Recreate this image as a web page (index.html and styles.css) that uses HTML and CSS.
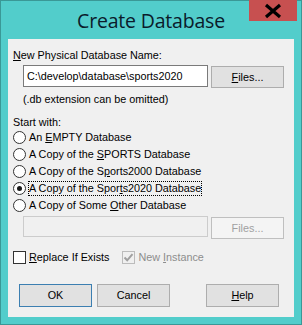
FILE: index.html
```html
<!DOCTYPE html>
<html lang="en">
<head>
    <meta charset="UTF-8">
    <title>Create Database</title>
    <link rel="stylesheet" href="styles.css">
</head>
<body>
    <div class="window">
        <div class="titlebar">
            <div class="title">Create Database</div>
            <div class="close">
                <svg width="20" height="16" viewBox="0 0 20 16">
                    <path d="M3 2 L17 14 M17 2 L3 14" stroke="#000" stroke-width="3.2" />
                </svg>
            </div>
        </div>

        <div class="client">
            <div class="label"><u>N</u>ew Physical Database Name:</div>
            <div class="file-row">
                <div class="textbox">C:\develop\database\sports2020</div>
                <div class="button"><u>F</u>iles...</div>
            </div>
            <div class="note">(.db extension can be omitted)</div>

            <div class="label start">Start with:</div>
            <div class="radio"><span class="dot"></span><span>An <u>E</u>MPTY Database</span></div>
            <div class="radio"><span class="dot"></span><span>A Copy of the <u>S</u>PORTS Database</span></div>
            <div class="radio"><span class="dot"></span><span>A Copy of the S<u>p</u>orts2000 Database</span></div>
            <div class="radio checked"><span class="dot"></span><span class="focus">A Copy of the Spor<u>t</u>s2020 Database</span></div>
            <div class="radio"><span class="dot"></span><span>A Copy of Some <u>O</u>ther Database</span></div>

            <div class="file-row other">
                <div class="textbox disabled"></div>
                <div class="button disabled">Files...</div>
            </div>

            <div class="check-row">
                <div class="check"><span class="box"></span><span><u>R</u>eplace If Exists</span></div>
                <div class="check disabled">
                    <span class="box">
                        <svg width="11" height="11" viewBox="0 0 11 11">
                            <path d="M1.5 5.5 L4.2 8.3 L9.5 2.2" fill="none" stroke="#a0a0a0" stroke-width="2" />
                        </svg>
                    </span>
                    <span>New <u>I</u>nstance</span>
                </div>
            </div>

            <div class="actions">
                <div class="button default">OK</div>
                <div class="button">Cancel</div>
                <div class="button help"><u>H</u>elp</div>
            </div>
        </div>
    </div>
</body>
</html>
```

FILE: styles.css
```css
body {
    margin: 0;
    background-color: #52cdcb;
    font-family: 'Liberation Sans', Arial, sans-serif;
    font-size: 10.8px;
    color: #000000;
}

.window {
    width: 302px;
    height: 325px;
    box-sizing: border-box;
    border: 1px solid #3a9896;
    background-color: #52cdcb;
    padding: 0 7px 7px 7px;
}

.titlebar {
    height: 38px;
    display: flex;
    justify-content: center;
    position: relative;
}

.title {
    font-family: 'Open Sans', 'Noto Sans', sans-serif;
    font-size: 19.5px;
    color: #0b1b2b;
    margin-top: 6px;
    letter-spacing: -0.2px;
}

.close {
    position: absolute;
    top: -1px;
    right: -3px;
    width: 48px;
    height: 21px;
    background-color: #c75050;
    display: flex;
    align-items: center;
    justify-content: center;
}

.client {
    height: 278px;
    background-color: #f0f0f0;
    padding: 10px 0 0 5px;
    box-sizing: border-box;
}

.label {
    line-height: 13px;
}

.file-row {
    display: flex;
    align-items: flex-start;
    margin: 3px 0 0 10px;
}

.textbox {
    width: 185px;
    height: 22px;
    box-sizing: border-box;
    border: 1px solid #7a7a7a;
    background-color: #fff;
    padding: 3px 0 0 3px;
    line-height: 14px;
}

.textbox.disabled {
    height: 21px;
    border-color: #cccccc;
    background-color: #f0f0f0;
}

.button {
    width: 73px;
    height: 22px;
    box-sizing: border-box;
    border: 1px solid #adadad;
    background-color: #e1e1e1;
    display: flex;
    align-items: center;
    justify-content: center;
    line-height: 13px;
}

.file-row .button {
    margin: 1px 0 0 3px;
}

.button.disabled {
    border-color: #bfbfbf;
    background-color: #f4f4f4;
    color: #a0a0a0;
}

.button.default {
    border-color: #3c7fb1;
}

.note {
    margin: 5px 0 0 10px;
    line-height: 13px;
}

.start {
    margin-top: 10px;
}

.radio {
    display: flex;
    align-items: center;
    height: 17px;
    line-height: 13px;
}

.dot {
    width: 11px;
    height: 11px;
    border: 1px solid #333;
    border-radius: 50%;
    background-color: #fff;
    margin-right: 3px;
    position: relative;
}

.radio.checked .dot::after {
    content: "";
    position: absolute;
    left: 3px;
    top: 3px;
    width: 5px;
    height: 5px;
    border-radius: 50%;
    background-color: #1a1a1a;
}

.focus {
    outline: 1px dotted #000;
    outline-offset: 0;
}

.other {
    margin-top: 2px;
}

.check-row {
    display: flex;
    align-items: center;
    margin-top: 11px;
    height: 14px;
}

.check {
    display: flex;
    align-items: center;
}

.check + .check {
    margin-left: 13px;
}

.box {
    width: 11px;
    height: 11px;
    border: 1px solid #333;
    background-color: #fff;
    margin-right: 3px;
    display: flex;
    align-items: center;
    justify-content: center;
}

.check.disabled {
    color: #8d8d8d;
}

.check.disabled .box {
    border-color: #bcbcbc;
    background-color: #f0f0f0;
}

.actions {
    display: flex;
    margin: 20px 0 0 6px;
}

.actions .button {
    height: 23px;
    margin-right: 5px;
}

.actions .help {
    margin-left: 31px;
}
```
